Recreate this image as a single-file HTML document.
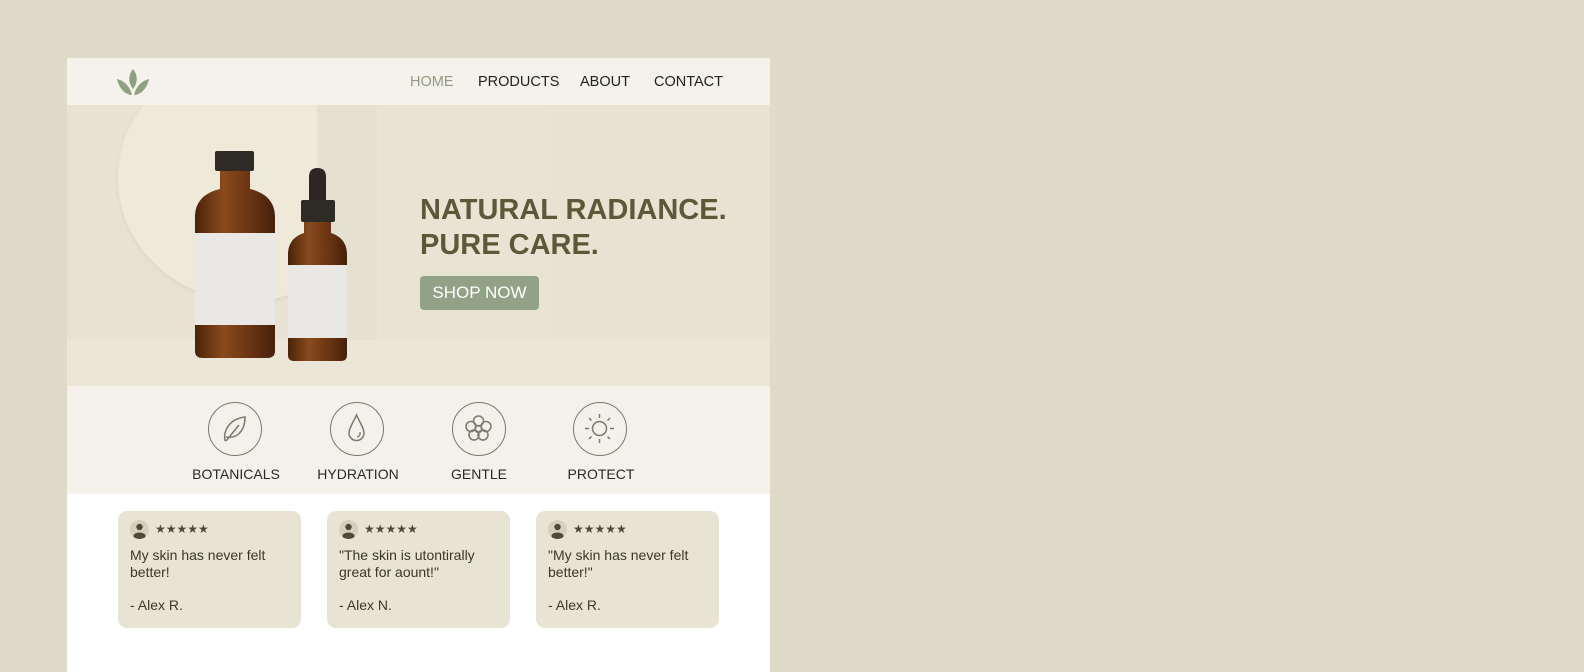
<!DOCTYPE html>
<html><head><style>
body{margin:0;width:1584px;height:672px;background:#dfdbcb;font-family:"Liberation Sans",sans-serif;position:relative;overflow:hidden}
.p{position:absolute;left:67px;top:58px;width:703px;height:614px;background:#fff}
.nav{position:absolute;left:0;top:0;width:703px;height:47px;background:#f4f2ea}
.nav a{position:absolute;top:16px;font-size:14.5px;color:#222;text-decoration:none}
.hero{position:absolute;left:0;top:47px;width:703px;height:281px;background:#e8e2d2;overflow:hidden}
.feat{position:absolute;left:0;top:328px;width:703px;height:108px;background:#f3f1e9}
.ic{position:absolute;top:16px;width:54px;height:54px;border:1.5px solid #7c7a6c;border-radius:50%;box-sizing:border-box}
.lb{position:absolute;top:80px;font-size:14px;color:#2a2a22;width:120px;text-align:center}
.card{position:absolute;top:453px;width:183px;height:117px;background:#e9e3d3;border-radius:9px}
.card .av{position:absolute;left:12px;top:9px;width:19px;height:19px;border-radius:50%;background:#d6cfbd;overflow:hidden}
.card .st{position:absolute;left:37px;top:11px;font-size:12px;color:#4e4a36}
.card .t{position:absolute;left:12px;top:36px;font-size:14px;line-height:17px;color:#3a3828}
.card .n{position:absolute;left:12px;top:86px;font-size:14px;color:#3a3828}
</style></head><body>
<div class="p">
<div class="nav">
<svg style="position:absolute;left:48px;top:9px" width="36" height="30" viewBox="0 0 36 30"><path d="M18 2C13 8 13 16 18 22C23 16 23 8 18 2Z" fill="#8fa183"/><path d="M2 12C4 22 11 28 17 28C15 20 10 14 2 12Z" fill="#8fa183"/><path d="M34 12C32 22 25 28 19 28C21 20 26 14 34 12Z" fill="#8fa183"/></svg>
<a style="left:343px;color:#8f9a82">HOME</a><a style="left:411px">PRODUCTS</a><a style="left:513px">ABOUT</a><a style="left:587px">CONTACT</a>
</div>
<div class="hero">
<div style="position:absolute;left:51px;top:-50px;width:260px;height:246px;border-radius:50%;background:#efe9da;box-shadow:0 2px 6px rgba(0,0,0,.05)"></div>
<div style="position:absolute;left:250px;top:0;width:60px;height:240px;background:#e6e0d0"></div>
<div style="position:absolute;left:310px;top:0;width:170px;height:281px;background:#e9e3d3"></div>
<div style="position:absolute;left:0;top:235px;width:703px;height:46px;background:#ebe6d8"></div>
<svg style="position:absolute;left:0;top:0" width="320" height="281" viewBox="0 0 320 281">
<defs><linearGradient id="g" x1="0" x2="1"><stop offset="0" stop-color="#4a2308"/><stop offset=".35" stop-color="#8a4a1c"/><stop offset=".7" stop-color="#6a3412"/><stop offset="1" stop-color="#45210a"/></linearGradient></defs>
<path d="M153 64H183V84C200 88 208 98 208 112V246Q208 253 200 253H136Q128 253 128 246V112C128 98 136 88 153 84Z" fill="url(#g)"/>
<rect x="148" y="46" width="39" height="20" rx="2" fill="#2e2a26"/>
<rect x="128" y="128" width="80" height="92" fill="#e9e8e4"/>
<path d="M237 116H264V128C276 132 280 140 280 150V250Q280 256 274 256H227Q221 256 221 250V150C221 140 225 132 237 128Z" fill="url(#g)"/>
<path d="M242 95V72Q242 63 250.5 63Q259 63 259 72V95Z" fill="#2a2724"/>
<rect x="234" y="95" width="34" height="22" rx="2" fill="#2e2a26"/>
<rect x="221" y="160" width="59" height="73" fill="#e9e8e4"/>
</svg>
<div style="position:absolute;left:353px;top:88px;font-size:29px;font-weight:bold;color:#5c5838;line-height:35px">NATURAL RADIANCE.<br>PURE CARE.</div>
<div style="position:absolute;left:353px;top:171px;width:119px;height:34px;background:#92a286;border-radius:4px;color:#fff;font-size:17px;line-height:34px;text-align:center">SHOP NOW</div>
</div>
<div class="feat">
<div class="ic" style="left:141px"><svg width="51" height="51" viewBox="0 0 51 51"><path d="M16 38C14 28 20 16 36 14C36 28 28 36 17 34M17 38L30 22" fill="none" stroke="#7c7a6c" stroke-width="1.5"/></svg></div>
<div class="ic" style="left:263px"><svg width="51" height="51" viewBox="0 0 51 51"><path d="M25.5 12C22 20 18 25 18 30A7.5 7.5 0 0 0 33 30C33 25 29 20 25.5 12Z" fill="none" stroke="#7c7a6c" stroke-width="1.5"/><path d="M29 29A4 4 0 0 1 26 34" fill="none" stroke="#7c7a6c" stroke-width="1.3"/></svg></div>
<div class="ic" style="left:385px"><svg width="51" height="51" viewBox="0 0 51 51"><g fill="none" stroke="#7c7a6c" stroke-width="1.5"><circle cx="25.5" cy="26" r="3.5"/><circle cx="25.5" cy="18" r="5"/><circle cx="33" cy="23.5" r="5"/><circle cx="30" cy="32" r="5"/><circle cx="21" cy="32" r="5"/><circle cx="18" cy="23.5" r="5"/></g></svg></div>
<div class="ic" style="left:506px"><svg width="51" height="51" viewBox="0 0 51 51"><g fill="none" stroke="#7c7a6c" stroke-width="1.5"><circle cx="25.5" cy="25.5" r="7"/><path d="M25.5 11V15M25.5 36V40M11 25.5H15M36 25.5H40M15 15L17.5 17.5M33.5 33.5L36 36M36 15L33.5 17.5M17.5 33.5L15 36"/></g></svg></div>
<div class="lb" style="left:109px">BOTANICALS</div><div class="lb" style="left:231px">HYDRATION</div><div class="lb" style="left:352px">GENTLE</div><div class="lb" style="left:474px">PROTECT</div>
</div>
<div class="card" style="left:51px"><div class="av"><svg width="19" height="19"><circle cx="9.5" cy="7" r="3.2" fill="#4e4a36"/><ellipse cx="9.5" cy="16" rx="6" ry="3.5" fill="#4e4a36"/></svg></div><div class="st">★★★★★</div><div class="t">My skin has never felt<br>better!</div><div class="n">- Alex R.</div></div>
<div class="card" style="left:260px"><div class="av"><svg width="19" height="19"><circle cx="9.5" cy="7" r="3.2" fill="#4e4a36"/><ellipse cx="9.5" cy="16" rx="6" ry="3.5" fill="#4e4a36"/></svg></div><div class="st">★★★★★</div><div class="t">"The skin is utontirally<br>great for aount!"</div><div class="n">- Alex N.</div></div>
<div class="card" style="left:469px"><div class="av"><svg width="19" height="19"><circle cx="9.5" cy="7" r="3.2" fill="#4e4a36"/><ellipse cx="9.5" cy="16" rx="6" ry="3.5" fill="#4e4a36"/></svg></div><div class="st">★★★★★</div><div class="t">"My skin has never felt<br>better!"</div><div class="n">- Alex R.</div></div>
</div>
</body></html>
